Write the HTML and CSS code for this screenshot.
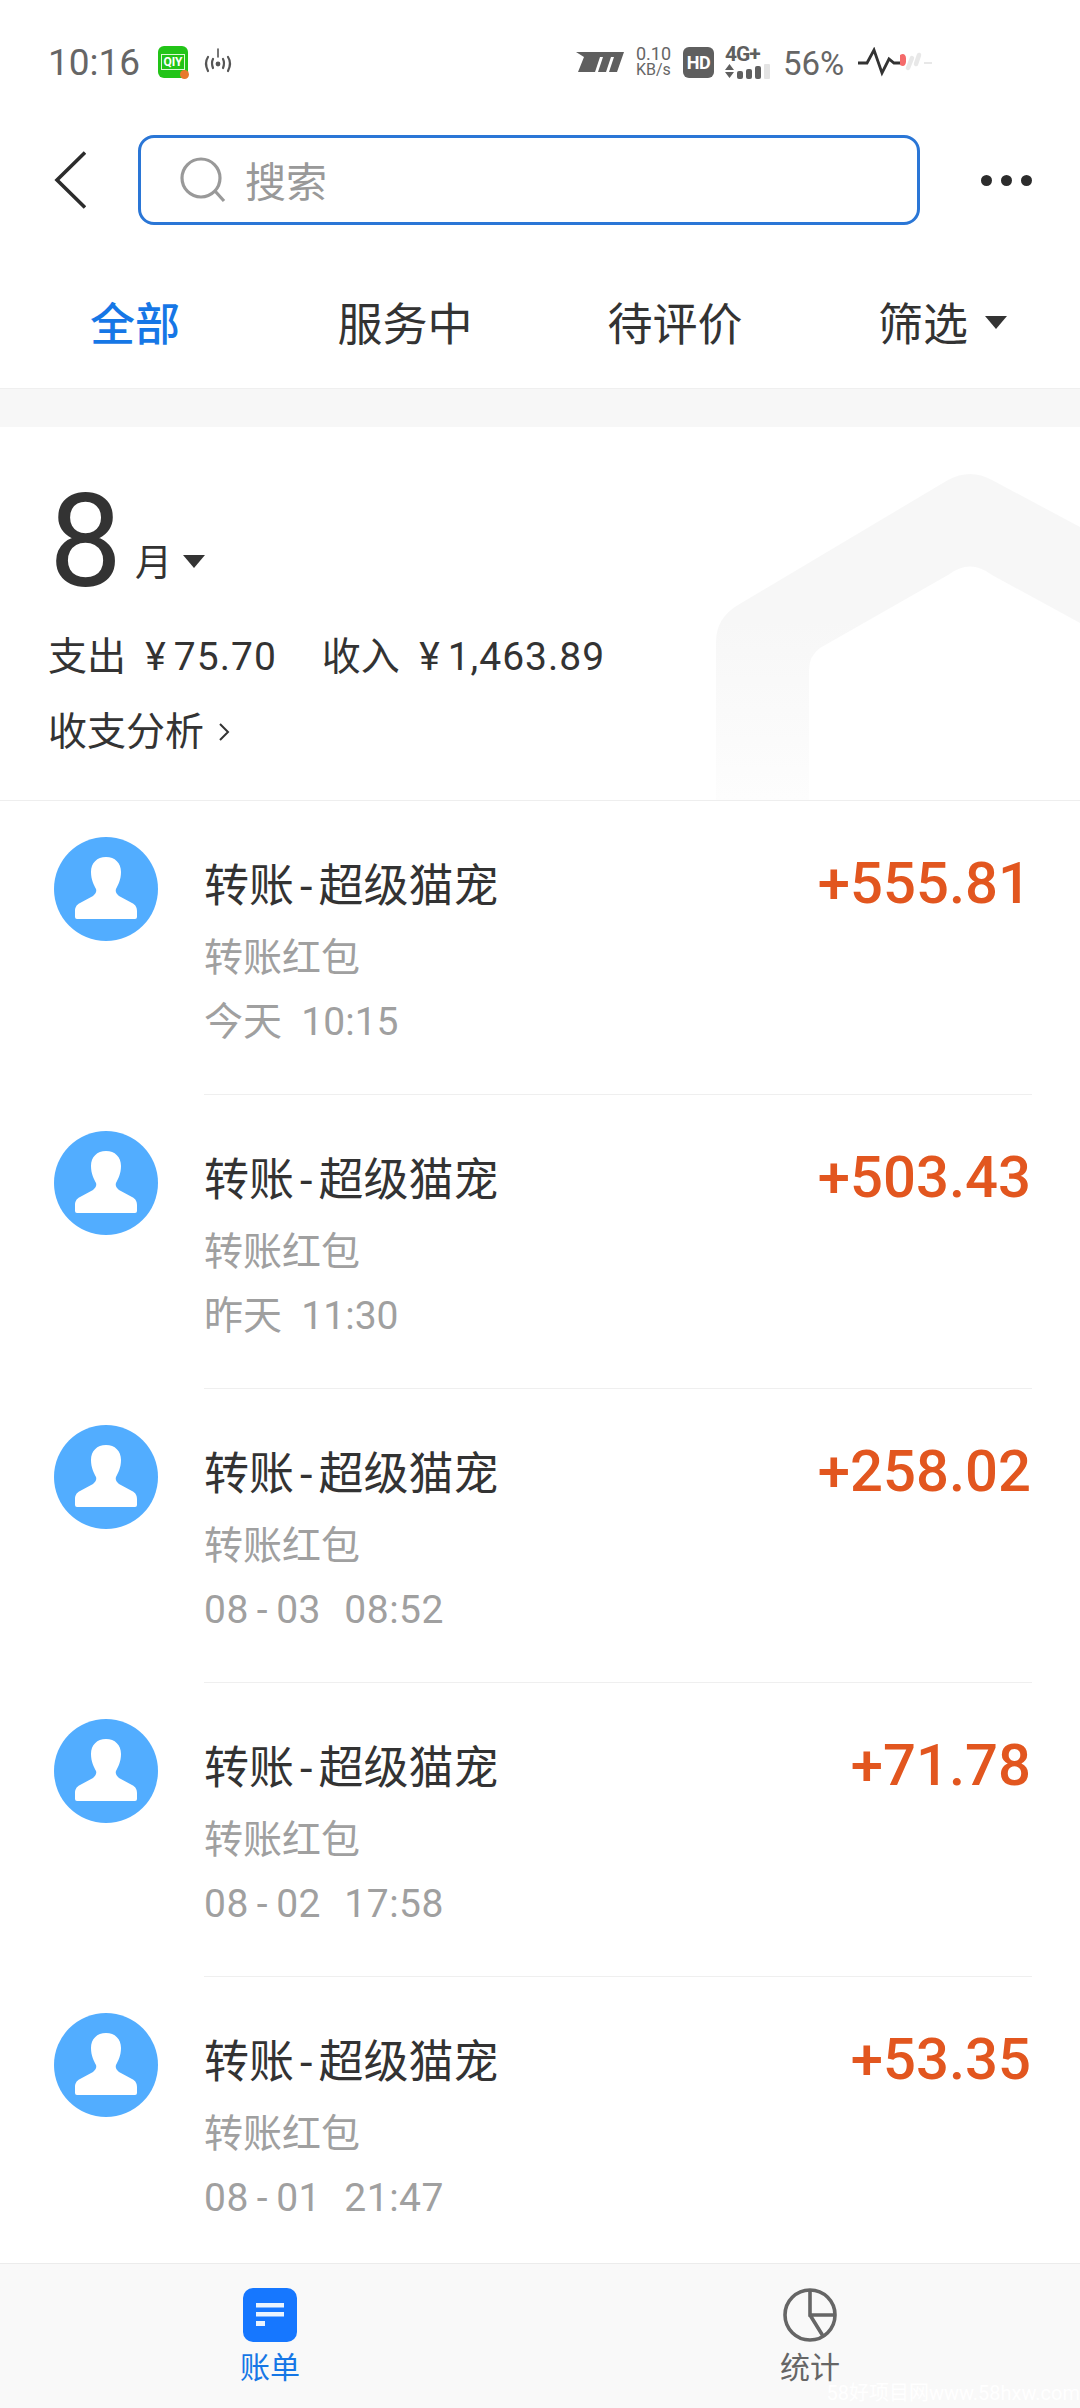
FILE: index.html
```html
<!DOCTYPE html>
<html lang="zh">
<head>
<meta charset="utf-8">
<title>账单</title>
<link rel="stylesheet" href="styles.css">
</head>
<body>
<svg class="defs" width="0" height="0" aria-hidden="true">
  <symbol id="avatar" viewBox="0 0 104 104">
    <circle cx="52" cy="52" r="52" fill="#52adff"/>
    <path fill="#fff" d="M52 20c-9 0-15 6-15 15c0 8 3 13 5 17c1 3-1 5-3 7l-13 7c-4 2-5 5-5 8v6q0 2 2 2h58q2 0 2-2v-6c0-3-1-6-5-8l-13-7c-2-2-4-4-3-7c2-4 5-9 5-17c0-9-6-15-15-15z"/>
  </symbol>
</svg>
<div class="app">
  <header class="status">
    <div class="status-left">
      <span class="time">10:16</span>
      <span class="qiy"><span class="qiy-text">QIY</span><i class="qiy-dot"></i></span>
      <svg class="hotspot" width="32" height="30" viewBox="0 0 32 30">
        <g fill="none" stroke="#555" stroke-width="2.2" stroke-linecap="round">
          <path d="M6 10q-4 6 0 14M11 12q-2 4 0 9M26 10q4 6 0 14M21 12q2 4 0 9"/>
          <path d="M16 2v8" stroke-width="1.6"/>
        </g>
        <circle cx="16" cy="17" r="2.4" fill="#555"/>
      </svg>
    </div>
    <div class="status-right">
      <svg class="carrier" width="48" height="24" viewBox="0 0 48 24">
        <path fill="#5f5f5f" d="M0 2h48l-7 20h-8l5-15h-3l-5 15h-8l5-15h-3l-5 15H2L8 7z"/>
      </svg>
      <span class="speed"><span>0.10</span><span>KB/s</span></span>
      <span class="hd">HD</span>
      <span class="net">
        <span class="net-top">4G+</span>
        <svg width="48" height="16" viewBox="0 0 48 16">
          <path fill="#5f5f5f" d="M0 7l4.500-6l4.500 6zM0 9h9l-4.500 6z"/>
          <rect x="12" y="8" width="6" height="8" rx="2" fill="#5f5f5f"/>
          <rect x="21" y="6" width="6" height="10" rx="2" fill="#5f5f5f"/>
          <rect x="30" y="3" width="6" height="13" rx="2" fill="#5f5f5f"/>
          <rect x="39" y="1" width="6" height="15" rx="1" fill="#e4e4e4"/>
        </svg>
      </span>
      <span class="battery">56%</span>
      <svg class="pulse" width="74" height="30" viewBox="0 0 74 30">
        <path fill="none" stroke="#333" stroke-width="2.8" d="M0 16h9l7-13l8 23l7-14l5 4h7"/>
        <path fill="#f46a6a" d="M42 8q5-3 6 3v4q-1 6-6 3z"/>
        <path fill="none" stroke="#e8e8e8" stroke-width="4.500" stroke-linecap="round" d="M50 21l4-10M58 17l3-9"/>
        <path fill="none" stroke="#e8e8e8" stroke-width="2" d="M66 16h8"/>
      </svg>
    </div>
  </header>

  <nav class="topbar">
    <svg class="back" width="32" height="58" viewBox="0 0 32 58">
      <path fill="none" stroke="#2c2c2c" stroke-width="3.600" d="M31 1.500L3 29l28 27.500"/>
    </svg>
    <div class="search">
      <svg width="48" height="46" viewBox="0 0 48 46">
        <g fill="none" stroke="#999" stroke-width="3.200">
          <circle cx="22" cy="21" r="19"/>
          <path d="M36 34l9 10"/>
        </g>
      </svg>
      <span class="search-text">搜索</span>
    </div>
    <div class="more"><i></i><i></i><i></i></div>
  </nav>

  <div class="tabs">
    <span class="tab tab-active">全部</span>
    <span class="tab">服务中</span>
    <span class="tab">待评价</span>
    <span class="tab">筛选<i class="caret caret-tab"></i></span>
  </div>

  <section class="summary">
    <svg class="summary-bg" width="364" height="328" viewBox="0 0 364 328">
      <defs>
        <linearGradient id="fade" x1="0" y1="0" x2="0" y2="1">
          <stop offset="0.45" stop-color="#f7f7f7"/>
          <stop offset="1" stop-color="#fdfdfd"/>
        </linearGradient>
      </defs>
      <path fill="url(#fade)" d="M0 328V170Q0 146 22 133L232 8Q254-4 276 8L364 55V151L276 103Q254 86 232 103L104 176Q93 184 93 198V328z"/>
    </svg>
    <div class="month">
      <span class="month-num">8</span>
      <span class="month-unit">月</span>
      <i class="caret caret-month"></i>
    </div>
    <div class="totals">
      <span>支出&nbsp;&nbsp;<span class="yen">¥</span><span class="money">75.70</span></span>
      <span>收入&nbsp;&nbsp;<span class="yen">¥</span><span class="money">1,463.89</span></span>
    </div>
    <div class="analysis">收支分析
      <svg width="12" height="20" viewBox="0 0 12 20"><path fill="none" stroke="#333" stroke-width="2" d="M2 2l8 8l-8 8"/></svg>
    </div>
  </section>

  <main class="list">
    <article class="row">
      <svg class="avatar"><use href="#avatar"/></svg>
      <div class="row-body">
        <div class="row-text">
          <div class="row-title">转账<span class="dash">-</span>超级猫宠</div>
          <div class="row-sub">转账红包</div>
          <div class="row-sub">今天&nbsp;&nbsp;10:15</div>
        </div>
        <div class="row-amount">+555.81</div>
      </div>
    </article>
    <article class="row">
      <svg class="avatar"><use href="#avatar"/></svg>
      <div class="row-body">
        <div class="row-text">
          <div class="row-title">转账<span class="dash">-</span>超级猫宠</div>
          <div class="row-sub">转账红包</div>
          <div class="row-sub">昨天&nbsp;&nbsp;11:30</div>
        </div>
        <div class="row-amount">+503.43</div>
      </div>
    </article>
    <article class="row">
      <svg class="avatar"><use href="#avatar"/></svg>
      <div class="row-body">
        <div class="row-text">
          <div class="row-title">转账<span class="dash">-</span>超级猫宠</div>
          <div class="row-sub">转账红包</div>
          <div class="row-sub row-date">08<span class="date-dash">-</span>03&nbsp;&nbsp;<span class="date-time">08:52</span></div>
        </div>
        <div class="row-amount">+258.02</div>
      </div>
    </article>
    <article class="row">
      <svg class="avatar"><use href="#avatar"/></svg>
      <div class="row-body">
        <div class="row-text">
          <div class="row-title">转账<span class="dash">-</span>超级猫宠</div>
          <div class="row-sub">转账红包</div>
          <div class="row-sub row-date">08<span class="date-dash">-</span>02&nbsp;&nbsp;<span class="date-time">17:58</span></div>
        </div>
        <div class="row-amount">+71.78</div>
      </div>
    </article>
    <article class="row">
      <svg class="avatar"><use href="#avatar"/></svg>
      <div class="row-body">
        <div class="row-text">
          <div class="row-title">转账<span class="dash">-</span>超级猫宠</div>
          <div class="row-sub">转账红包</div>
          <div class="row-sub row-date">08<span class="date-dash">-</span>01&nbsp;&nbsp;<span class="date-time">21:47</span></div>
        </div>
        <div class="row-amount">+53.35</div>
      </div>
    </article>
  </main>

  <footer class="bottom">
    <div class="bottom-item bottom-active">
      <svg width="54" height="54" viewBox="0 0 54 54">
        <rect width="54" height="54" rx="10" fill="#1677ff"/>
        <rect x="13" y="15" width="28" height="4.500" fill="#eaf4ff"/>
        <rect x="13" y="24" width="28" height="4.500" fill="#eaf4ff"/>
        <rect x="13" y="33" width="9" height="5" fill="#eaf4ff"/>
      </svg>
      <span>账单</span>
    </div>
    <div class="bottom-item">
      <svg width="54" height="54" viewBox="0 0 54 54">
        <g fill="none" stroke="#666" stroke-width="3.600">
          <circle cx="27" cy="27" r="25"/>
          <path d="M27 2v25h25M27 27l13 21"/>
        </g>
      </svg>
      <span>统计</span>
    </div>
    <span class="watermark">58好项目网www.58hxw.com</span>
  </footer>
</div>
</body>
</html>
```
FILE: styles.css
```css
* { box-sizing: border-box; }
html, body { margin: 0; padding: 0; background: #fff; }
body { font-family: Roboto, "Noto Sans CJK SC", sans-serif; color: #333; }
i { font-style: normal; display: block; }
.defs { position: absolute; }

.app { width: 1080px; height: 2408px; display: flex; flex-direction: column; overflow: hidden; background: #fff; }

/* status bar */
.status { height: 120px; padding: 4px 148px 0 48px; display: flex; align-items: center; justify-content: space-between; flex: none; }
.status-left, .status-right { display: flex; align-items: center; }
.time { font-size: 37px; color: #666; width: 110px; }
.qiy { position: relative; width: 30px; height: 32px; border-radius: 6px; background: #22c418; display: flex; align-items: center; justify-content: center; margin-right: 14px; }
.qiy-text { font-size: 12px; font-weight: 700; color: #fff; border: 1px solid #dff9d8; line-height: 14px; padding: 0 1px; }
.qiy-dot { position: absolute; right: -1px; bottom: -1px; width: 9px; height: 9px; border-radius: 50%; background: #e8792c; }
.carrier { margin-right: 12px; }
.speed { display: flex; flex-direction: column; font-size: 16px; line-height: 16px; color: #666; width: 47px; align-items: flex-start; }
.speed span:first-child { font-size: 18px; }
.hd { width: 31px; height: 31px; border-radius: 6px; background: #5f5f5f; color: #fff; font-size: 18px; font-weight: 700; letter-spacing: -0.5px; display: flex; align-items: center; justify-content: center; margin-right: 11px; }
.net { display: flex; flex-direction: column; width: 58px; }
.net-top { font-size: 21px; line-height: 17px; font-weight: 700; letter-spacing: -1px; color: #5f5f5f; }
.battery { font-size: 33px; color: #666; width: 75px; margin-top: 2px; }

/* search row */
.topbar { height: 120px; flex: none; padding: 0 48px 0 54px; display: flex; align-items: center; }
.back { flex: none; margin-right: 52px; }
.search { width: 782px; height: 90px; border: 3px solid #2a76d6; border-radius: 16px; display: flex; align-items: center; padding-left: 38px; flex: none; }
.search-text { font-size: 41px; color: #999; margin-left: 18px; padding-bottom: 2px; }
.more { margin-left: auto; display: flex; gap: 9px; }
.more i { width: 11px; height: 11px; border-radius: 50%; background: #2c2c2c; }

/* tabs */
.tabs { height: 149px; flex: none; display: flex; padding-top: 14px; border-bottom: 1px solid #efefef; }
.tab { flex: 1 1 0; min-width: 0; display: flex; align-items: center; justify-content: center; font-size: 45px; color: #333; }
.tab-active { color: #1677e6; font-weight: 500; }
.caret { width: 0; height: 0; border-left: 11px solid transparent; border-right: 11px solid transparent; border-top: 13px solid #333; }
.caret-tab { margin-left: 17px; margin-right: 5px; margin-top: 2px; }

/* summary */
.summary { position: relative; margin-top: 38px; height: 374px; flex: none; padding: 57px 48px 0; border-bottom: 1px solid #eee; box-shadow: 0 -38px 0 #f7f7f7; background: #fff; }
.summary-bg { position: absolute; right: 0; bottom: 0; }
.month { position: relative; display: flex; align-items: baseline; height: 116px; padding-left: 1px; }
.month-num { font-size: 130px; line-height: 116px; color: #333; margin-right: 13px; }
.month-unit { font-size: 37px; line-height: 40px; color: #333; align-self: flex-end; margin-bottom: 16px; }
.caret-month { margin-left: 11px; align-self: center; margin-top: 38px; }
.totals { position: relative; display: flex; gap: 45px; font-size: 39px; line-height: 56px; margin-top: 29px; color: #333; }
.yen { margin-right: 8px; }
.money { letter-spacing: 1px; }
.analysis { position: relative; font-size: 39px; line-height: 56px; margin-top: 19px; display: flex; align-items: center; gap: 14px; }

/* list */
.list { flex: 1; min-height: 0; overflow: hidden; }
.row { display: flex; padding: 0 48px 0 54px; height: 294px; }
.avatar { width: 104px; height: 104px; margin-top: 36px; margin-right: 46px; flex: none; }
.row-body { flex: 1; height: 294px; border-bottom: 1px solid #efefef; display: flex; justify-content: space-between; }
.row-text { padding-top: 56px; }
.row-title { font-size: 45px; line-height: 60px; color: #333; margin-bottom: 9px; }
.row-sub { font-size: 39px; line-height: 64px; color: #a0a0a0; }
.row-date { letter-spacing: 0.5px; }
.date-time { margin-left: 3px; }
.dash { margin: 0 6px; }
.date-dash { margin: 0 8px; }
.row-amount { font-size: 58px; line-height: 60px; margin-top: 52px; margin-right: 1px; color: #e2561f; font-weight: 500; }

/* bottom */
.bottom { position: relative; height: 145px; flex: none; background: #f9f9f9; border-top: 1px solid #ececec; display: flex; }
.bottom-item { flex: 1; display: flex; flex-direction: column; align-items: center; padding-top: 24px; font-size: 30px; line-height: 40px; color: #666; gap: 6px; }
.bottom-active { color: #1677e6; }
.watermark { position: absolute; right: 0; bottom: 2px; font-size: 20px; color: #fff; }
```
